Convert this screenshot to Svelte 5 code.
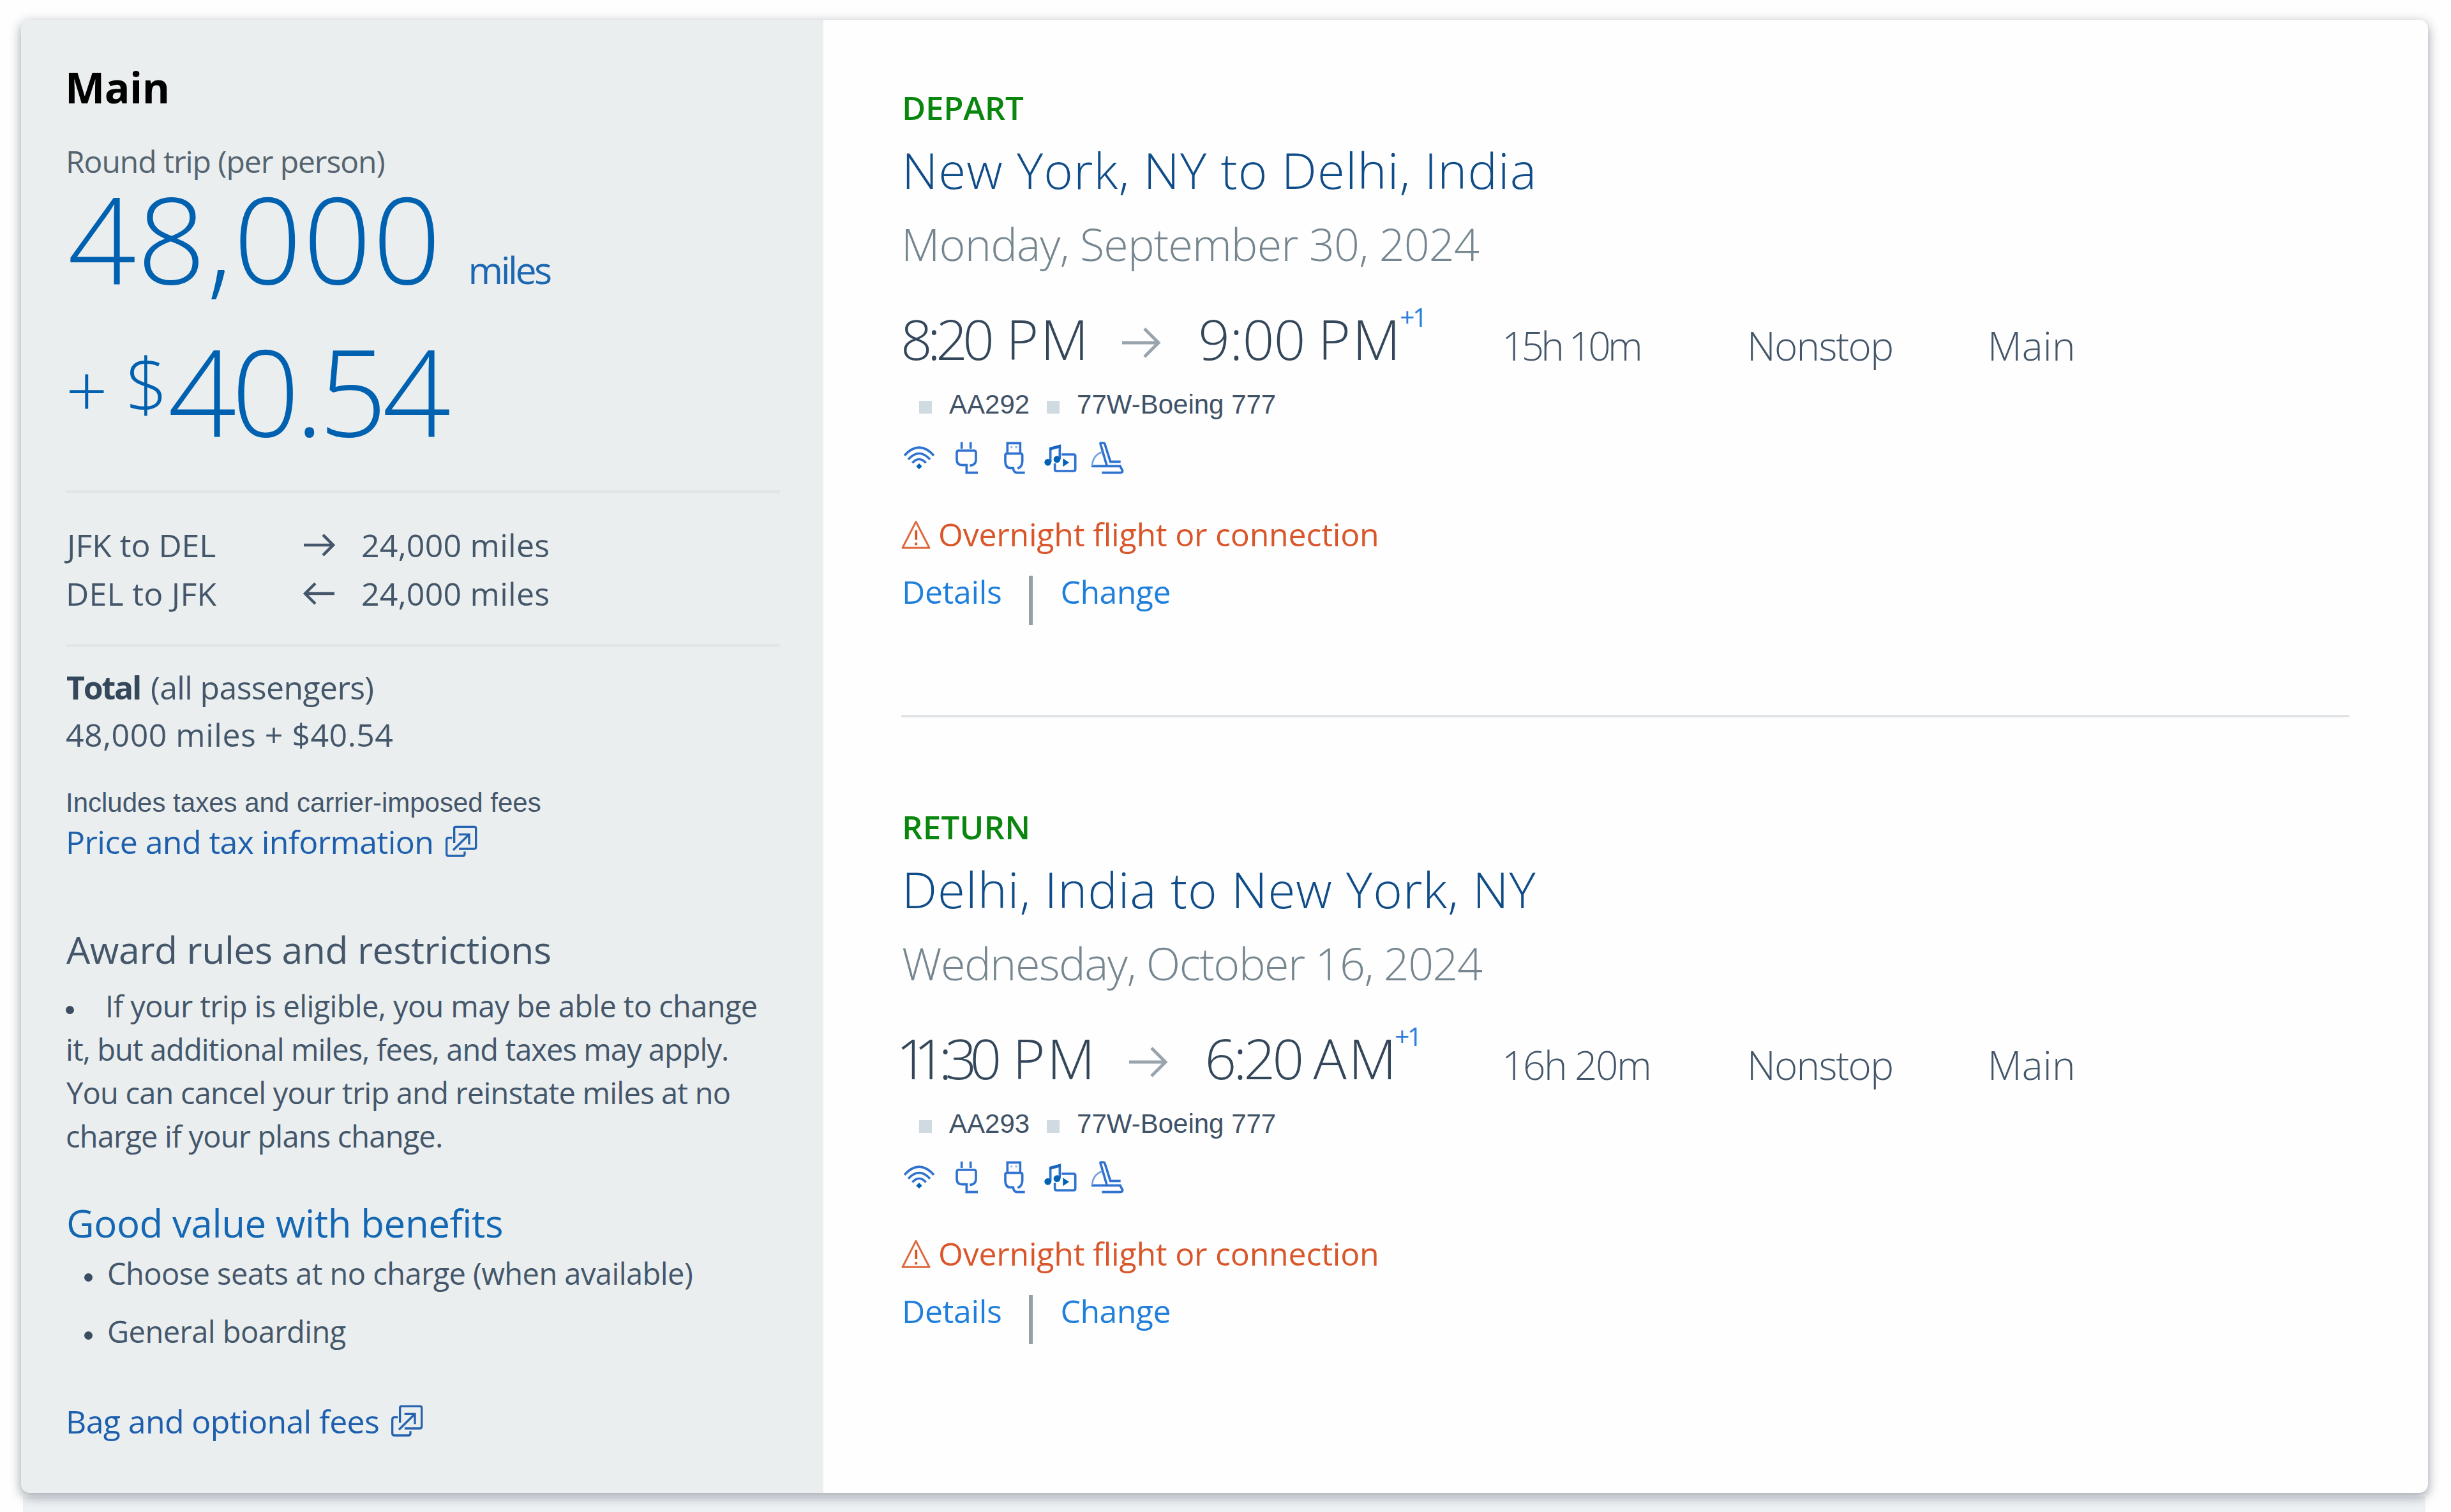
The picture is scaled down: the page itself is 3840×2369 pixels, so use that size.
<script>
  const legs = [
    {
      id: 'depart',
      tag: 'DEPART',
      title: 'New York, NY to Delhi, India',
      date: 'Monday, September 30, 2024',
      from: { clock: '8:20', half: 'PM', track: -7.6, gap: 26 },
      to: { clock: '9:00', half: 'PM', track: -0.5, gap: 20 },
      duration: '15h 10m',
      flight: 'AA292'
    },
    {
      id: 'return',
      tag: 'RETURN',
      title: 'Delhi, India to New York, NY',
      date: 'Wednesday, October 16, 2024',
      from: { clock: '11:30', half: 'PM', track: -10.7, gap: 28 },
      to: { clock: '6:20', half: 'AM', track: -4.7, gap: 19 },
      duration: '16h 20m',
      flight: 'AA293'
    }
  ];
</script>

{#snippet external()}
  <svg class="external" viewBox="327 38 150 150" fill="none" stroke="#2563b0" stroke-width="10">
    <path d="M368 122V52Q368 45 375 45H462Q470 45 470 53V140Q470 149 461 149H390" />
    <path d="M358 97H342Q332 97 332 107V172Q332 182 342 182H408Q417 182 417 172V162" />
    <path d="M363 155L436 83M389 81H438V129" />
  </svg>
{/snippet}

{#snippet time(t)}
  <span class="clock" style:letter-spacing="{t.track}px" style:margin-right="{t.gap}px">{t.clock}</span><span class="half">{t.half}</span>
{/snippet}

<div class="page">
  <div class="next"></div>
  <main class="card">
    <aside>
      <h2>Main</h2>
      <div class="per">Round trip (per person)</div>
      <div class="miles-row"><span class="big">48,000</span><span class="unit">miles</span></div>
      <div class="cash-row"><span class="plus">+</span><span class="dollar">$</span><span class="big cash">40.54</span></div>
      <div class="rule first"></div>
      <div class="route">
        <span class="jfk">JFK to DEL</span>
        <svg viewBox="0 0 48 36" fill="none" stroke="#44566a" stroke-width="4.5"><path d="M0 18H46M30 2L46 18L30 34" /></svg>
        <span>24,000 miles</span>
      </div>
      <div class="route">
        <span>DEL to JFK</span>
        <svg viewBox="0 0 48 36" fill="none" stroke="#44566a" stroke-width="4.5"><path d="M48 18H2M18 2L2 18L18 34" /></svg>
        <span>24,000 miles</span>
      </div>
      <div class="rule second"></div>
      <div class="total"><b>Total</b><span>(all passengers)</span></div>
      <div class="sum">48,000 miles + $40.54</div>
      <div class="includes">Includes taxes and carrier-imposed fees</div>
      <a class="link price">Price and tax information{@render external()}</a>
      <h3>Award rules and restrictions</h3>
      <p class="rules">
        <span class="l1"><i class="dot"></i>If your trip is eligible, you may be able to change</span>
        <span class="l2">it, but additional miles, fees, and taxes may apply.</span>
        <span class="l3">You can cancel your trip and reinstate miles at no</span>
        <span class="l4">charge if your plans change.</span>
      </p>
      <h3 class="good">Good value with benefits</h3>
      <ul>
        <li><i class="dot"></i>Choose seats at no charge (when available)</li>
        <li><i class="dot"></i>General boarding</li>
      </ul>
      <a class="link bag">Bag and optional fees{@render external()}</a>
    </aside>

    <section class="legs">
      {#each legs as leg, i}
        {#if i}<div class="divider"></div>{/if}
        <article class={leg.id}>
          <div class="tag">{leg.tag}</div>
          <div class="title">{leg.title}</div>
          <div class="date">{leg.date}</div>
          <div class="schedule">
            <div class="times">
              {@render time(leg.from)}
              <svg class="arrow" viewBox="0 0 60 48" fill="none" stroke="#9aa4ad" stroke-width="5"><path d="M0 24H57M35 2L57 24L35 46" /></svg>
              {@render time(leg.to)}
              <span class="plus-day">+1</span>
            </div>
            <span class="duration">{leg.duration}</span>
            <span class="stops">Nonstop</span>
            <span class="cabin">Main</span>
          </div>
          <div class="plane"><i></i><span>{leg.flight}</span><i></i><span>77W-Boeing 777</span></div>
          <div class="amenities">
            <svg class="wifi" viewBox="45 66 150 154" fill="none" stroke="#2f72cf" stroke-width="11">
              <path d="M51 131Q120 56 189 131M69 149Q120 94 171 149M88 166Q120 131 152 166" />
              <path d="M120 168L134 182L120 196L106 182Z" fill="#0061b5" stroke="none" />
            </svg>
            <svg class="plug" viewBox="285 66 115 154" fill="none" stroke="#2f72cf" stroke-width="11">
              <path d="M320 68V99M362 68V99M358 178Q387 176 387 150V118Q387 108 378 108H306Q297 108 297 118V150Q297 176 322 176H343V212H396" />
            </svg>
            <svg class="usb" viewBox="515 66 105 154" fill="none" stroke="#2f72cf" stroke-width="11">
              <path d="M534 120V73H594V120M524 130Q524 122 532 122H596Q604 122 604 130V158Q604 184 582 192M524 128V162Q526 190 548 190H561Q563 212 580 212H616" />
              <path d="M549 92H557M571 92H579" stroke="#8fb3e4" stroke-width="10" />
            </svg>
            <svg class="media" viewBox="705 66 158 154" fill="none" stroke="#2f72cf" stroke-width="11">
              <path d="M790 126H846Q854 126 854 134V196Q854 204 846 204H766Q758 204 758 196V168" />
              <path d="M737 162V98L781 86V148" />
              <path d="M733 94L785 80V94L733 108Z" fill="#1a66bd" stroke="none" />
              <g fill="#0061b5" stroke="none"><circle cx="725" cy="163" r="16" /><circle cx="768" cy="149" r="16" /><path d="M796 145V184L825 164Z" /></g>
            </svg>
            <svg class="seat" viewBox="925 66 158 154" fill="none" stroke="#2f72cf" stroke-width="11">
              <path d="M1003 178L973 76Q972 72 977 72H986Q992 72 994 78L1020 160H1068M931 181H1066L1077 202Q1077 212 1066 212H980" />
              <path d="M934 180Q938 128 982 115" stroke="#6f9fdf" stroke-width="8" />
            </svg>
          </div>
          <div class="alert">
            <svg viewBox="36 74 138 136" fill="none" stroke="#dd6a3f" stroke-width="9">
              <path d="M105 81L168 204H42Z" stroke-linejoin="round" />
              <path d="M106 122V166M106 180V192" stroke="#d8501c" stroke-width="11" />
            </svg>
            <span>Overnight flight or connection</span>
          </div>
          <div class="actions"><a class="details">Details</a><i></i><a class="change">Change</a></div>
        </article>
      {/each}
    </section>
  </main>
</div>

<style>
  :global(body) { background: #fefefe; overflow: hidden; }
  .page {
    box-sizing: border-box;
    position: relative;
    width: 3840px;
    height: 2369px;
    padding: 31px 36px 30px 33px;
    overflow: hidden;
    font-family: 'Open Sans', 'Noto Sans', sans-serif;
    color: #44566a;
    white-space: nowrap;
  }
  /* top edge of the card that follows */
  .next {
    position: absolute;
    left: 36px;
    right: 40px;
    bottom: 0;
    height: 24px;
    background: #eef1f3;
  }
  .card {
    position: relative;
    display: flex;
    height: 2308px;
    background: #fefefe;
    border-radius: 14px;
    box-shadow: 0 6px 16px 1px rgba(60, 75, 92, 0.44), 0 0 24px rgba(60, 75, 92, 0.06);
  }
  aside {
    box-sizing: border-box;
    width: 1257px;
    padding: 65px 68px 0 70px;
    background: #eaeeef;
    border-radius: 14px 0 0 14px;
  }
  h2, h3, p, ul { margin: 0; padding: 0; font-weight: 400; }
  svg { display: block; flex: none; overflow: visible; }
  h2 { margin-left: -1px; font-size: 66px; line-height: 80px; font-weight: 700; letter-spacing: -0.5px; color: #000; }
  .per { margin-top: 47px; font-size: 48px; line-height: 60px; letter-spacing: -1.05px; color: #55646f; }
  .miles-row, .cash-row { display: flex; color: #0061b0; font-weight: 300; }
  .miles-row { align-items: baseline; height: 178px; padding-left: 3px; }
  .big { font-size: 188px; line-height: 178px; letter-spacing: 1.6px; }
  .unit { margin-left: 41px; font-size: 59px; line-height: 80px; font-weight: 400; letter-spacing: -3.5px; color: #1c67b2; }
  .cash-row { align-items: flex-start; height: 180px; margin-top: 60px; }
  .plus { margin-top: 59px; font-size: 115px; line-height: 60px; }
  .dollar { margin: 29px 0 0 28px; font-size: 116px; line-height: 100px; }
  .big.cash { line-height: 180px; letter-spacing: -7.68px; }
  .rule { height: 5px; background: #e1e6e9; }
  .rule.first { margin: 67px 0 43px; }
  .rule.second { margin: 41px 0 26px; }
  .route { display: grid; grid-template-columns: 373px 90px auto; align-items: center; font-size: 50px; line-height: 76px; letter-spacing: 0.25px; }
  .route svg { width: 48px; height: 36px; }
  .jfk { margin-left: 2px; letter-spacing: -0.05px; }
  .total { display: flex; gap: 16px; padding-left: 1px; font-size: 50px; line-height: 74px; }
  .total b { letter-spacing: -2.2px; color: #34475b; }
  .total span { letter-spacing: -0.65px; }
  .sum { font-size: 50px; line-height: 74px; letter-spacing: 0.5px; }
  .includes { margin: 42px 0 0; font: 42px/56px 'Liberation Sans', Arial, sans-serif; }
  .link { display: flex; font-size: 50px; line-height: 66px; color: #1d5fad; }
  .price { letter-spacing: -0.58px; }
  .external { width: 50px; height: 50px; margin: 7px 0 0 19px; }
  h3 { margin-top: 95px; padding-left: 1px; font-size: 59px; line-height: 80px; letter-spacing: -0.47px; }
  .rules { margin-top: 15px; font-size: 47px; line-height: 68px; }
  .rules span { display: block; }
  .rules .l1 { display: flex; align-items: center; letter-spacing: -0.63px; }
  .l2 { letter-spacing: -0.95px; }
  .l3 { padding-left: 1px; letter-spacing: -0.79px; }
  .l4 { letter-spacing: -0.82px; }
  .dot { flex: none; width: 13px; height: 13px; border-radius: 50%; background: #3b4d61; }
  .l1 .dot { margin: 12px 49px 0 0; }
  h3.good { margin-top: 62px; font-size: 60px; letter-spacing: -0.42px; color: #1467b3; }
  ul { margin-top: 5px; list-style: none; }
  li { display: flex; align-items: center; margin-bottom: 23px; padding-left: 29px; font-size: 47px; line-height: 68px; letter-spacing: -0.55px; }
  li .dot { margin: 12px 23px 0 0; }
  .bag { margin-top: 74px; letter-spacing: -0.62px; }

  .legs { box-sizing: border-box; flex: 1; padding: 107px 123px 0; }
  .divider { height: 4px; margin: 141px 0 141px -1px; background: #e0e4e7; }
  .tag { font-size: 51px; line-height: 60px; font-weight: 600; letter-spacing: -0.3px; color: #0a860f; }
  .return .tag { letter-spacing: 0.2px; }
  .title { margin-top: 18px; font-size: 78px; line-height: 100px; font-weight: 300; letter-spacing: 1.08px; color: #0f4c88; }
  .return .title { letter-spacing: 1.03px; }
  .date { margin-top: 26px; font-size: 70px; line-height: 80px; font-weight: 300; letter-spacing: -0.86px; color: #758690; }
  .depart .date { margin-left: -1px; }
  .return .date { letter-spacing: -1.49px; }
  .schedule { display: grid; grid-template-columns: 940px 384px 377px auto; align-items: start; height: 100px; margin-top: 58px; font-size: 62px; line-height: 122px; font-weight: 300; }
  .times { display: flex; align-items: baseline; height: 100px; margin-left: -2px; font-size: 87px; line-height: 100px; color: #34475a; }
  .return .times { margin-left: -9px; }
  .half { letter-spacing: 3px; }
  .return .clock { display: inline-block; }
  .return .clock:first-child::first-letter { letter-spacing: -22px; }
  .arrow { align-self: center; width: 60px; height: 48px; margin: 14px 59px 0 50px; }
  .plus-day { align-self: flex-start; margin: -31px 0 0 -4px; font-size: 41px; line-height: 94px; font-weight: 400; letter-spacing: -3.5px; color: #2c80dd; }
  .return .plus-day { margin-left: -6px; }
  .duration { letter-spacing: -4.71px; }
  .return .duration { letter-spacing: -2.38px; }
  .stops { letter-spacing: -1.75px; }
  .cabin { letter-spacing: 0.2px; }
  .plane { display: flex; align-items: baseline; gap: 27px; margin-top: 24px; padding-left: 27px; font: 42px/60px 'Liberation Sans', Arial, sans-serif; color: #405266; }
  .plane i { width: 20px; height: 20px; background: #cfdae1; }
  .amenities { display: flex; height: 51px; margin-top: 28px; padding-left: 2px; }
  .amenities svg { height: 51.33px; }
  .amenities .wifi { width: 50px; }
  .amenities .plug { width: 38.33px; margin-left: 30px; }
  .amenities .usb { width: 35px; margin-left: 38.3px; }
  .amenities .media { width: 52.67px; margin-left: 28.3px; }
  .amenities .seat { width: 52.67px; margin-left: 20.7px; }
  .alert { display: flex; gap: 12px; margin-top: 59px; font-size: 50px; line-height: 70px; letter-spacing: -0.22px; color: #d8562a; }
  .alert svg { width: 46px; height: 45.3px; margin: 13px 0 0 -1px; }
  .actions { display: flex; align-items: flex-start; height: 77px; margin-top: 30px; font-size: 50px; line-height: 70px; color: #1f7fdb; }
  .actions a { margin-top: -10px; }
  .actions i { width: 6px; height: 77px; margin: 0 43px; background: #93a0aa; }
  .details { letter-spacing: -0.37px; }
  .change { letter-spacing: -0.55px; }
</style>
